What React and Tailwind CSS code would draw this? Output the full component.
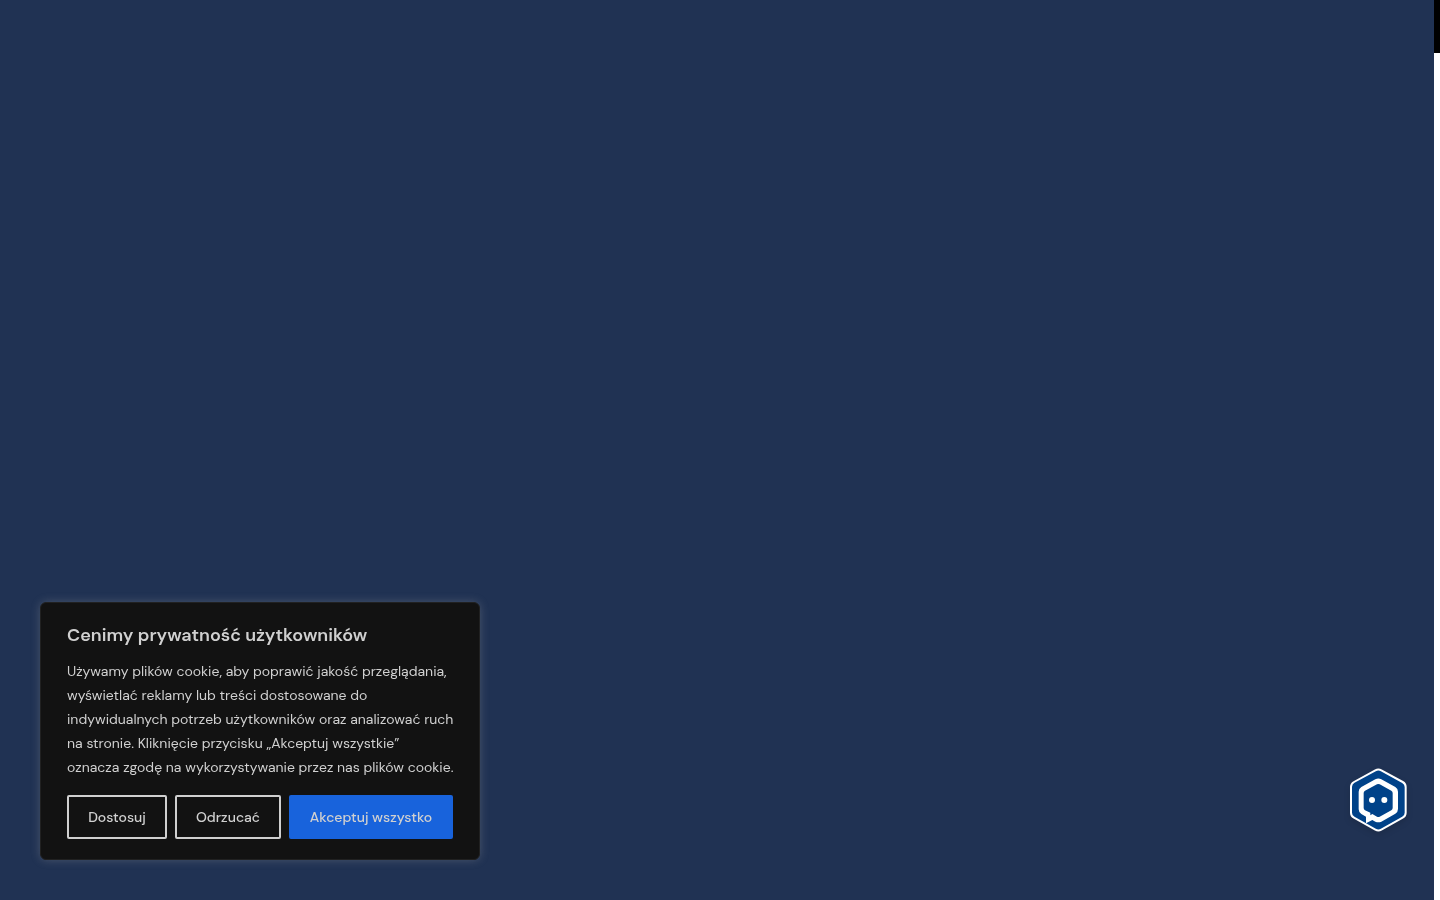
import React, { useState } from "react";

const buttonBase =
  "h-11 rounded-xs border-2 text-sm font-medium whitespace-nowrap cursor-pointer";

const ChatIcon = () => (
  <svg viewBox="0 0 198 210" className="w-full h-full" aria-hidden="true">
    <path
      d="M91 16 Q100 11 109 16 L173 51 Q182 56 182 66 L182 143 Q182 153 173 158 L109 194 Q100 199 91 194 L27 158 Q18 153 18 143 L18 66 Q18 56 27 51 Z"
      fill="#004289"
      stroke="#fff"
      strokeWidth="6"
    />
    <path
      d="M91 43 Q100 38 109 43 L151 66 Q159 71 159 80 L159 132 Q159 141 151 146 L109 170 Q100 174 91 170 L82 165 L63 175 L63 155 L49 147 Q41 142 41 133 L41 80 Q41 71 49 66 Z"
      fill="#fff"
    />
    <path
      d="M96 58 Q100 56 104 58 L139 77 Q143 79 143 84 L143 129 Q143 133 139 136 L104 155 Q100 157 96 155 L82 147 L76 151 L76 143 L60 136 Q56 133 56 129 L56 84 Q56 79 60 77 Z"
      fill="#004289"
    />
    <circle cx="81" cy="105" r="9" fill="#fff" />
    <circle cx="118" cy="105" r="9" fill="#fff" />
  </svg>
);

const CookieBanner = ({ onClose }) => (
  <section
    aria-labelledby="cookie-title"
    className="fixed bottom-10 left-10 w-[440px] max-w-full rounded-md border border-[#212121] bg-[#121212] px-[26px] py-5 text-[#d0d0d0] shadow-[0_0_10px_#acabab4c]"
  >
    <h2 id="cookie-title" className="mb-3 text-lg leading-6 font-[650]">
      Cenimy prywatność użytkowników
    </h2>
    <p className="-mr-0.5 mb-4 text-sm leading-6">
      Używamy plików cookie, aby poprawić jakość przeglądania, wyświetlać
      reklamy lub treści dostosowane do indywidualnych potrzeb użytkowników oraz
      analizować ruch na stronie. Kliknięcie przycisku „Akceptuj wszystkie”
      oznacza zgodę na wykorzystywanie przez nas plików cookie.
    </p>
    <div className="grid grid-cols-[100fr_106fr_164fr] gap-2">
      <button
        type="button"
        className={`${buttonBase} border-[#d0d0d0]`}
      >
        Dostosuj
      </button>
      <button
        type="button"
        className={`${buttonBase} border-[#d0d0d0]`}
        onClick={onClose}
      >
        Odrzucać
      </button>
      <button
        type="button"
        className={`${buttonBase} border-[#1863dc] bg-[#1863dc]`}
        onClick={onClose}
      >
        Akceptuj wszystko
      </button>
    </div>
  </section>
);

const App = () => {
  const [showBanner, setShowBanner] = useState(true);

  return (
    <div className="flex min-h-screen bg-[#203253] font-['DM_Sans','Open_Sans',sans-serif]">
      <main className="flex-1" />
      <div className="w-[6px] bg-white" aria-hidden="true">
        <div className="h-[53px] bg-black" />
      </div>

      {showBanner && <CookieBanner onClose={() => setShowBanner(false)} />}

      <button
        type="button"
        aria-label="Czat"
        className="fixed right-[29px] bottom-[65px] h-[70px] w-[66px] cursor-pointer drop-shadow-md"
      >
        <ChatIcon />
      </button>
    </div>
  );
};

export default App;
